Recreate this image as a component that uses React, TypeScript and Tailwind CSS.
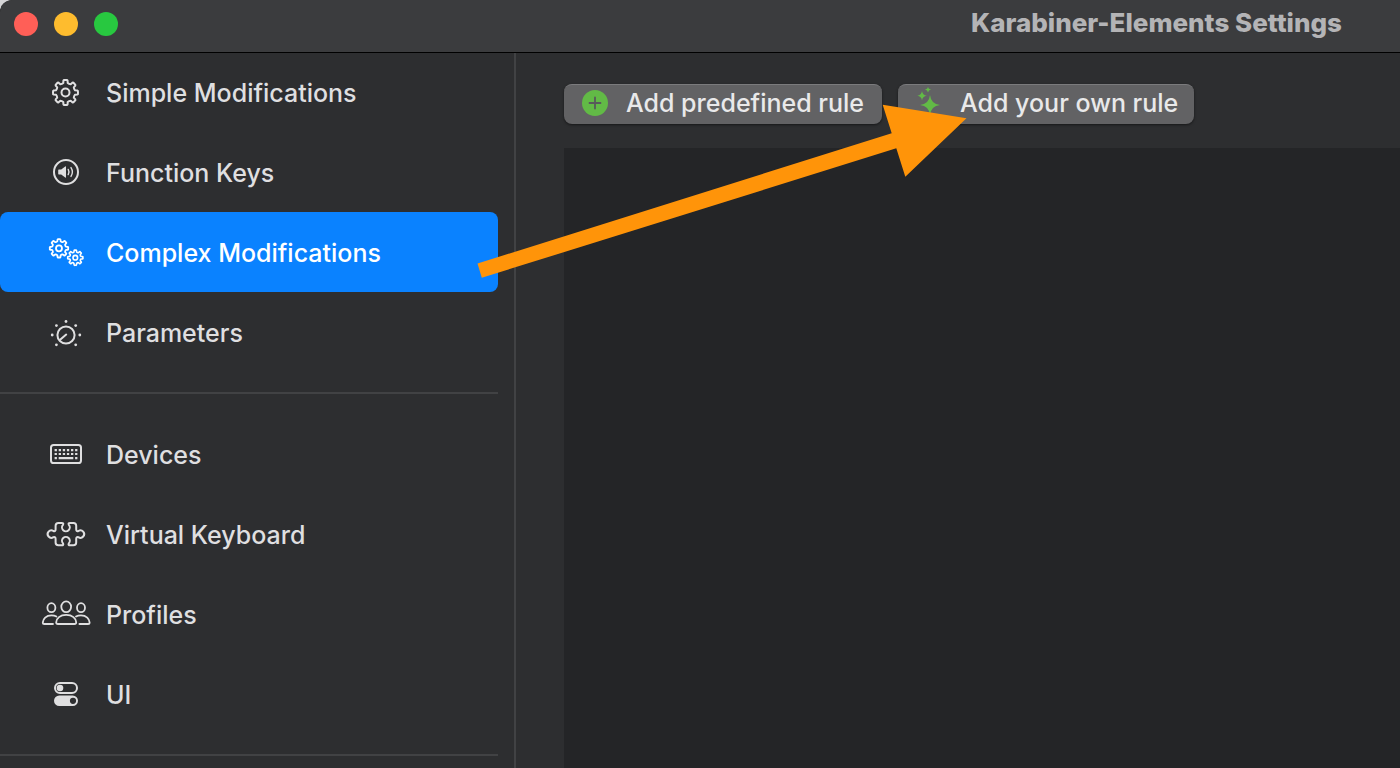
import React, { useState } from 'react';

// Outline of an eight-toothed gear
const gearPath = (cx: number, cy: number, outer: number, inner: number) => {
  const point = (radius: number, degrees: number) => {
    const a = (degrees * Math.PI) / 180;
    return `${(cx + radius * Math.sin(a)).toFixed(2)} ${(cy - radius * Math.cos(a)).toFixed(2)}`;
  };
  let d = '';
  for (let i = 0; i < 8; i++) {
    const a = i * 45;
    d += `${i === 0 ? 'M' : 'L'}${point(inner, a - 13)} L${point(outer - 0.5, a - 10)}`;
    d += ` Q${point(outer + 0.3, a - 8)} ${point(outer, a - 4)} L${point(outer, a + 4)}`;
    d += ` Q${point(outer + 0.3, a + 8)} ${point(outer - 0.5, a + 10)} L${point(inner, a + 13)}`;
    d += ` Q${point(inner - 0.7, a + 22.5)} ${point(inner, a + 32)}`;
  }
  return d + 'Z';
};

const icons: Record<string, React.ReactNode> = {
  gear: (
    <>
      <path d={gearPath(25.5, 20.5, 12.5, 9.8)} />
      <circle cx="25.5" cy="20.5" r="4" />
    </>
  ),
  speaker: (
    <>
      <circle cx="26" cy="20" r="12" />
      <path
        d="M18.8 17.6h2.4l4-3.2c.4-.3.8-.1.8.4v10.4c0 .5-.4.7-.8.4l-4-3.2h-2.4c-.4 0-.6-.2-.6-.6v-3.6c0-.4.2-.6.6-.6z"
        fill="currentColor"
        stroke="none"
      />
      <path d="M28.2 17.4q1.6 2.6 0 5.2M31 15.6q2.8 4.4 0 8.8" strokeWidth="1.4" />
    </>
  ),
  gears: (
    <>
      <path d={gearPath(19, 16.3, 9.2, 7.2)} strokeWidth="1.8" />
      <circle cx="19" cy="16.3" r="3" strokeWidth="1.8" />
      <path d={gearPath(35.3, 25.7, 7.6, 5.9)} strokeWidth="1.6" />
      <circle cx="35.3" cy="25.7" r="2.3" strokeWidth="1.6" />
    </>
  ),
  dial: (
    <>
      <circle cx="26" cy="23" r="8.6" />
      <path d="M20.4 27.6l5.8-5" />
      <g fill="currentColor" stroke="none">
        <circle cx="26" cy="9.5" r="1.4" />
        <circle cx="16.4" cy="13.6" r="1.4" />
        <circle cx="35.7" cy="13.6" r="1.4" />
        <circle cx="12.2" cy="23" r="1.4" />
        <circle cx="39.8" cy="23" r="1.4" />
        <circle cx="16.4" cy="32.8" r="1.4" />
        <circle cx="35.7" cy="32.8" r="1.4" />
      </g>
    </>
  ),
  keyboard: (
    <>
      <rect x="11" y="11" width="30" height="18" rx="2.6" />
      <path d="M14.6 16.2H37.4M14.6 20H37.4" strokeWidth="2.2" strokeDasharray="2.3 1.8" strokeLinecap="butt" />
      <path d="M14.6 24.2h2.3M18.7 24.2h14.6M35.1 24.2h2.3" strokeWidth="2.2" strokeLinecap="butt" />
    </>
  ),
  puzzle: (
    <path d="M18.4 8.9H21.6Q24 8.9 23 10.8A3.9 3.9 0 1 0 28.8 10.8Q27.8 8.9 30.2 8.9H33.4Q36.2 8.9 36.2 11.7V15.2Q36.2 17.8 38.4 17A3.7 3.7 0 1 1 38.4 23.2Q36.2 22.4 36.2 25V28.5Q36.2 31.3 33.4 31.3H30.2Q27.8 31.3 28.8 29.4A3.9 3.9 0 1 0 23 29.4Q24 31.3 21.6 31.3H18.4Q15.6 31.3 15.6 28.5V25Q15.6 22.4 13.4 23.2A3.7 3.7 0 1 1 13.4 17Q15.6 17.8 15.6 15.2V11.7Q15.6 8.9 18.4 8.9Z" />
  ),
  people: (
    <g strokeWidth="1.8">
      <ellipse cx="26.2" cy="12.8" rx="4.9" ry="5.4" />
      <path d="M18 30Q16.2 30 16.2 28.2C16.4 24.4 20 20.8 26.2 20.8S36 24.4 36.2 28.2Q36.2 30 34.4 30Z" />
      <ellipse cx="11.4" cy="13.7" rx="4" ry="4.5" />
      <path d="M13 30H4.4Q2.8 30 2.8 28.4C3 25 6 21.4 11.4 21.4Q14.4 21.4 16.4 22.6" />
      <ellipse cx="41" cy="13.7" rx="4" ry="4.5" />
      <path d="M39.4 30H48Q49.6 30 49.6 28.4C49.4 25 46.4 21.4 41 21.4Q38 21.4 36 22.6" />
    </g>
  ),
  toggles: (
    <>
      <rect x="15" y="9" width="22" height="10" rx="5" />
      <circle cx="20" cy="14" r="3.3" fill="currentColor" stroke="none" />
      <path
        d="M19.3 21.5h13.4a5.3 5.3 0 0 1 0 10.6H19.3a5.3 5.3 0 0 1 0-10.6zM33 23.7a3.1 3.1 0 1 0 0 6.2a3.1 3.1 0 0 0 0-6.2z"
        fill="currentColor"
        fillRule="evenodd"
        stroke="none"
      />
    </>
  ),
};

const groups = [
  [
    { name: 'Simple Modifications', icon: 'gear' },
    { name: 'Function Keys', icon: 'speaker' },
    { name: 'Complex Modifications', icon: 'gears' },
    { name: 'Parameters', icon: 'dial' },
  ],
  [
    { name: 'Devices', icon: 'keyboard' },
    { name: 'Virtual Keyboard', icon: 'puzzle' },
    { name: 'Profiles', icon: 'people' },
    { name: 'UI', icon: 'toggles' },
  ],
];

function SidebarIcon({ name }: { name: string }) {
  return (
    <svg
      viewBox="0 0 52 40"
      className="h-10 w-[52px] shrink-0"
      fill="none"
      stroke="currentColor"
      strokeWidth="2"
      strokeLinecap="round"
      strokeLinejoin="round"
      aria-hidden="true"
    >
      {icons[name]}
    </svg>
  );
}

export default function App() {
  const [selected, setSelected] = useState('Complex Modifications');

  const ruleButton =
    'flex h-10 items-center gap-[18px] rounded-lg border-t border-[#7b7b7d] bg-[#626264] pb-[3px] pl-[18px] text-[#e9e9ea] shadow-sm shadow-black/40';

  return (
    <div className="h-screen overflow-hidden bg-[#d5d5d7] font-['Inter',sans-serif] text-[25px] leading-8 font-medium">
      <div className="relative flex h-full flex-col overflow-hidden rounded-tl-xl bg-[#2d2e30]">
        {/* Title bar */}
        <header className="relative z-10 flex h-[52px] shrink-0 items-center justify-between rounded-tl-xl bg-[#3b3c3e] pr-[58px] pl-[14px] shadow-[0_1px_0_#000]">
          <div className="flex gap-4 pb-1">
            <button aria-label="Close" className="size-6 rounded-full bg-[#ff5f57]" />
            <button aria-label="Minimize" className="size-6 rounded-full bg-[#febc2e]" />
            <button aria-label="Zoom" className="size-6 rounded-full bg-[#28c840]" />
          </div>
          <h1 className="pb-[6px] text-[26px] font-extrabold text-[#b4b4b6]">Karabiner-Elements Settings</h1>
        </header>

        <div className="flex min-h-0 flex-1">
          {/* Sidebar */}
          <nav className="w-[516px] shrink-0 overflow-hidden border-r-2 border-[#414244] pr-4">
            {groups.map((group, index) => (
              <div key={index}>
                {group.map((item) => (
                  <button
                    key={item.name}
                    onClick={() => setSelected(item.name)}
                    className={`flex h-20 w-full items-center gap-[14px] rounded-lg pl-10 text-left ${
                      selected === item.name ? 'bg-[#0a82ff] text-white' : 'text-[#dfdfe0]'
                    }`}
                  >
                    <SidebarIcon name={item.icon} />
                    <span className="pt-[2px]">{item.name}</span>
                  </button>
                ))}
                <hr className="my-5 border-t-2 border-[#414244]" />
              </div>
            ))}
          </nav>

          {/* Rules */}
          <main className="flex min-w-0 flex-1 flex-col gap-6 pt-8 pl-12">
            <div className="flex gap-4">
              <button className={`${ruleButton} w-[318px]`}>
                <svg viewBox="0 0 26 26" className="size-[26px] shrink-0" aria-hidden="true">
                  <circle cx="13" cy="13" r="13" fill="#62ba46" />
                  <path d="M13 7.5v11M7.5 13h11" stroke="#58595b" strokeWidth="1.8" strokeLinecap="round" />
                </svg>
                Add predefined rule
              </button>
              <button className={`${ruleButton} w-[296px]`}>
                <svg viewBox="0 0 26 32" className="h-8 w-[26px] shrink-0" fill="#62ba46" aria-hidden="true">
                  <path d="M14 8Q15 17 24 18Q15 19 14 28Q13 19 4 18Q13 17 14 8z" />
                  <path d="M6 4Q6.6 8.2 10.7 8.7Q6.6 9.2 6 13.4Q5.4 9.2 1.3 8.7Q5.4 8.2 6 4z" />
                  <path d="M12 0Q12.4 2.2 15 2.6Q12.4 3 12 5.4Q11.6 3 9 2.6Q11.6 2.2 12 0z" />
                </svg>
                Add your own rule
              </button>
            </div>
            <section aria-label="Rules" className="flex-1 bg-[#242527]" />
          </main>
        </div>

        {/* Arrow from the sidebar entry to the button */}
        <svg
          viewBox="0 0 490 174"
          className="pointer-events-none absolute top-[104px] left-[477px] z-20 h-[174px] w-[490px]"
          fill="#ff9409"
          aria-hidden="true"
        >
          <path d="M0.5 159.5L414.7 29.3L405.7 0.7L489.5 14.3L428.3 72.7L419.3 44.3L4.8 173.8z" />
        </svg>
      </div>
    </div>
  );
}
